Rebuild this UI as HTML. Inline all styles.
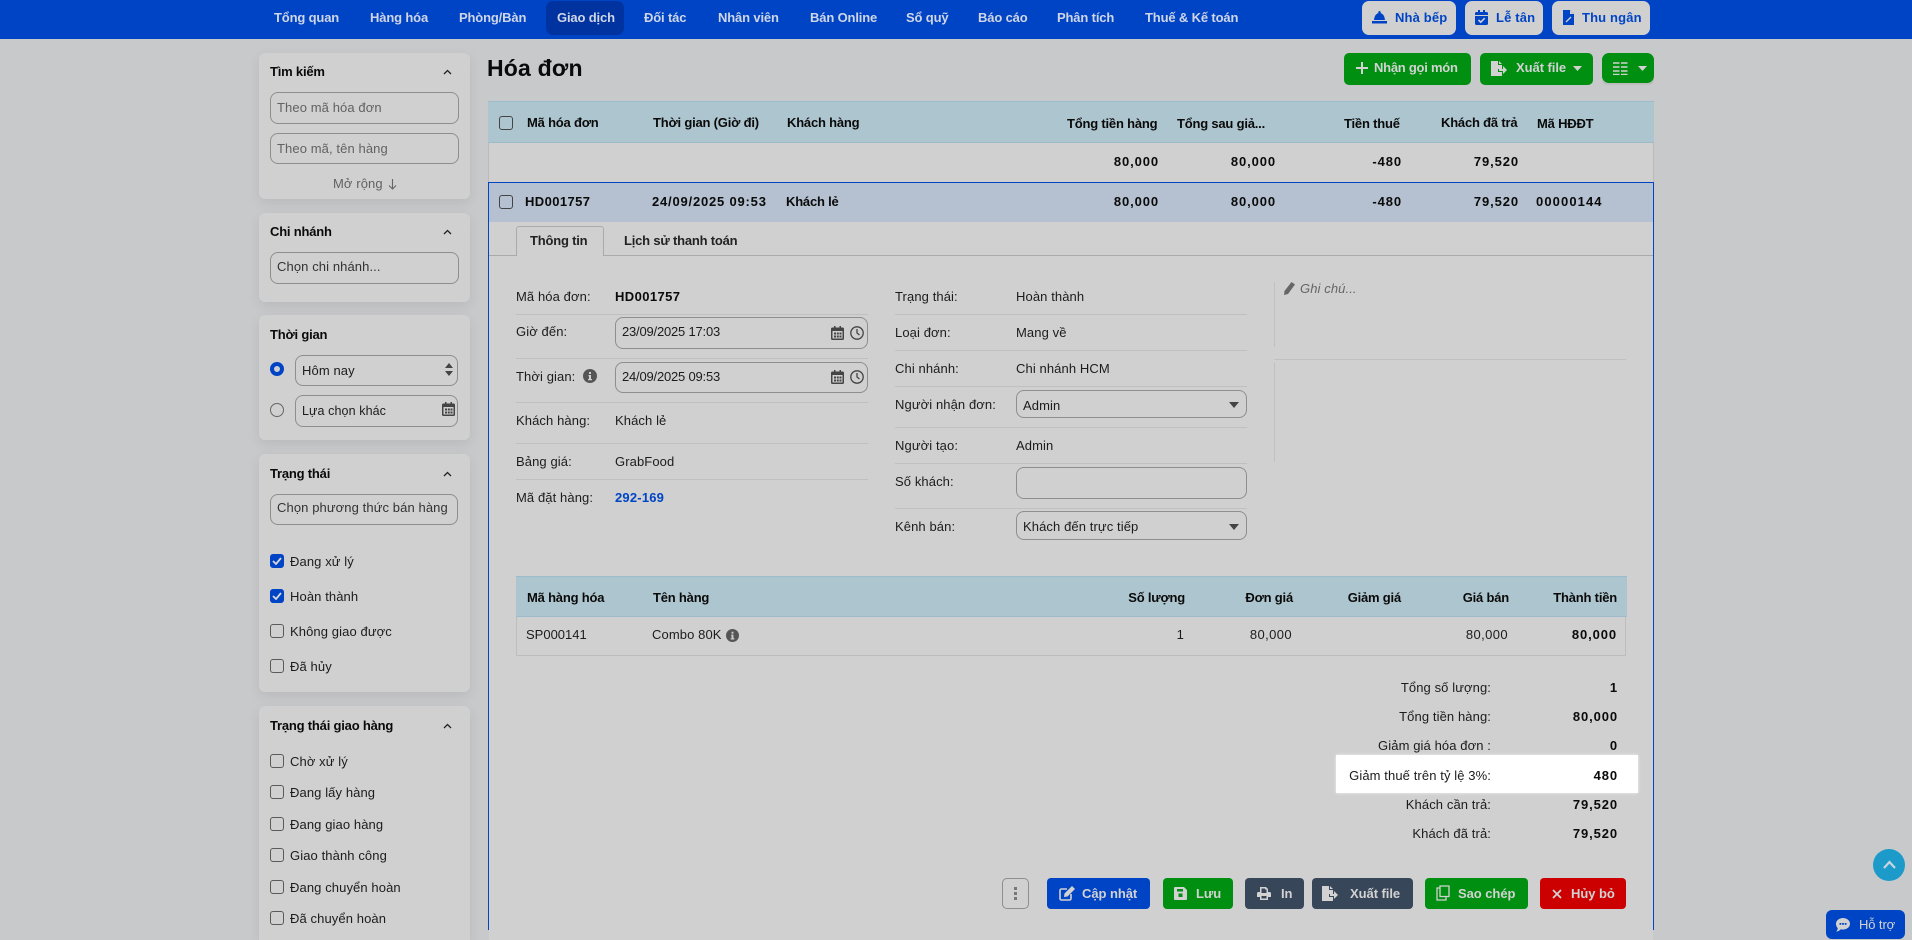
<!DOCTYPE html>
<html lang="vi"><head><meta charset="utf-8"><title>Hóa đơn</title>
<style>
*{box-sizing:border-box}
html,body{margin:0;padding:0;width:1912px;height:940px;overflow:hidden;background:#c8c9cb;font-family:"Liberation Sans","Noto Sans CJK SC",sans-serif;font-size:13px;color:#1c1c1c}
.a,.t,.r,.c,svg{position:absolute}
.t,.r,.c{line-height:16px;white-space:nowrap;letter-spacing:.1px}
.b{font-weight:700;color:#0a0a0a;letter-spacing:-.2px}
.n{font-weight:700;color:#0a0a0a;letter-spacing:.9px}
.m{letter-spacing:.4px}
.d{letter-spacing:-.2px}
.c{transform:translateX(-50%)}
.nav{left:0;top:0;width:1912px;height:39px;background:#0044c6}
.nt{color:#cfd6e6;font-weight:700;top:10px;letter-spacing:-.15px}
.nb{top:1px;height:34px;background:#d0d0d0;border-radius:7px}
.nbt{top:10px;color:#0044c6;font-weight:700;letter-spacing:.15px}
.card{left:259px;width:211px;background:#d0d0d0;border-radius:6px;box-shadow:0 4px 12px rgba(0,0,0,.08)}
.inp{border:1px solid #8e8e8e;border-radius:8px}
.ph{color:#626262}
.cb{left:270px;width:14px;height:14px;border:1px solid #5a5a5a;border-radius:3px}
.cb.on{background:#0044c6;border-color:#0044c6}
.hl{background:#adc5ce;border-top:1px solid #9dbccb;border-bottom:1px solid #9dbccb}
.sep{height:1px;background:#c0c0c0}
.btn{height:31px;border-radius:4px}
.wt{color:#d2d2d2;font-weight:700;letter-spacing:-.05px}
.gr{background:#008f11}
</style></head><body>

<div class="a nav"></div>
<div class="a" style="left:546px;top:1px;width:78px;height:34px;background:#0033a0;border-radius:7px"></div>
<span class="t nt" style="left:274px">Tổng quan</span>
<span class="t nt" style="left:370px">Hàng hóa</span>
<span class="t nt" style="left:459px">Phòng/Bàn</span>
<span class="t nt" style="left:557px">Giao dịch</span>
<span class="t nt" style="left:644px">Đối tác</span>
<span class="t nt" style="left:718px">Nhân viên</span>
<span class="t nt" style="left:810px">Bán Online</span>
<span class="t nt" style="left:906px">Sổ quỹ</span>
<span class="t nt" style="left:978px">Báo cáo</span>
<span class="t nt" style="left:1057px">Phân tích</span>
<span class="t nt" style="left:1145px">Thuế &amp; Kế toán</span>

<div class="a nb" style="left:1362px;width:94px"></div>
<div class="a nb" style="left:1465px;width:78px"></div>
<div class="a nb" style="left:1552px;width:98px"></div>
<svg style="left:1372px;top:11px" width="15" height="13" viewBox="0 0 15 13"><path fill="#0044c6" d="M7.5 0a1.3 1.3 0 0 1 1 2.1C11 2.6 12.6 5 13 9H2C2.4 5 4 2.6 6.5 2.1A1.3 1.3 0 0 1 7.5 0zM0 10h15v2.5H0z"/></svg>
<span class="t nbt" style="left:1395px">Nhà bếp</span>
<svg style="left:1475px;top:10px" width="13" height="15" viewBox="0 0 13 15"><path fill="#0044c6" d="M3 0h2v2h3V0h2v2h1.5A1.5 1.5 0 0 1 13 3.5V5H0V3.5A1.5 1.5 0 0 1 1.5 2H3zM0 6h13v7.5a1.5 1.5 0 0 1-1.5 1.500h-10A1.500 1.500 0 0 1 0 13.500z"/><path fill="none" stroke="#d0d0d0" stroke-width="1.6" d="M3.5 10l2.200 2.200 4-4"/></svg>
<span class="t nbt" style="left:1496px">Lễ tân</span>
<svg style="left:1563px;top:10px" width="11" height="15" viewBox="0 0 11 15"><path fill="#0044c6" d="M0 0h7l4 4v11H0z"/><path fill="none" stroke="#d0d0d0" stroke-width="1.3" d="M3 12l5-5"/><path fill="#d0d0d0" d="M7 0v4h4z"/></svg>
<span class="t nbt" style="left:1582px">Thu ngân</span>

<!-- sidebar -->
<div class="a card" style="top:53px;height:146px"></div>
<span class="t b" style="left:270px;top:64px">Tìm kiếm</span>
<svg style="left:443px;top:69px" width="9" height="6" viewBox="0 0 9 6"><path fill="none" stroke="#222" stroke-width="1.3" d="M1 5l3.5-3.500L8 5"/></svg>
<div class="a inp" style="left:270px;top:92px;width:189px;height:32px"></div>
<span class="t ph" style="left:277px;top:100px">Theo mã hóa đơn</span>
<div class="a inp" style="left:270px;top:133px;width:189px;height:31px"></div>
<span class="t ph" style="left:277px;top:141px">Theo mã, tên hàng</span>
<span class="t ph" style="left:333px;top:176px">Mở rộng</span>
<svg style="left:388px;top:178px" width="9" height="12" viewBox="0 0 9 12"><path fill="none" stroke="#666" stroke-width="1.1" d="M4.5 1v10M1 7.500l3.500 3.500L8 7.500"/></svg>

<div class="a card" style="top:213px;height:89px"></div>
<span class="t b" style="left:270px;top:224px">Chi nhánh</span>
<svg style="left:443px;top:229px" width="9" height="6" viewBox="0 0 9 6"><path fill="none" stroke="#222" stroke-width="1.3" d="M1 5l3.5-3.500L8 5"/></svg>
<div class="a inp" style="left:270px;top:252px;width:189px;height:32px"></div>
<span class="t" style="left:277px;top:259px;color:#333">Chọn chi nhánh...</span>

<div class="a card" style="top:315px;height:125px"></div>
<span class="t b" style="left:270px;top:327px">Thời gian</span>
<div class="a" style="left:270px;top:362px;width:14px;height:14px;border-radius:50%;border:4px solid #0044c6;background:#d0d0d0"></div>
<div class="a inp" style="left:295px;top:355px;width:163px;height:31px"></div>
<span class="t" style="left:302px;top:363px">Hôm nay</span>
<svg style="left:445px;top:363px" width="8" height="13" viewBox="0 0 8 13"><path fill="#444" d="M4 0l4 5H0zM4 13L0 8h8z"/></svg>
<div class="a" style="left:270px;top:403px;width:14px;height:14px;border-radius:50%;border:1px solid #666"></div>
<div class="a inp" style="left:295px;top:395px;width:163px;height:32px"></div>
<span class="t" style="left:302px;top:403px;font-size:12.5px">Lựa chọn khác</span>
<svg style="left:442px;top:402px" width="13" height="14" viewBox="0 0 13 14"><path fill="#444" d="M3 0h1.500v1.500h4V0H10v1.500h1.500A1.500 1.500 0 0 1 13 3v9.500a1.500 1.500 0 0 1-1.500 1.500h-10A1.500 1.500 0 0 1 0 12.500V3a1.500 1.500 0 0 1 1.500-1.500H3z"/><path fill="#d0d0d0" d="M1.500 5h10v7.500h-10z"/><path fill="#444" d="M3 6.500h2v2H3zM5.800 6.500h2v2h-2zM8.500 6.500h2v2h-2zM3 9.500h2v2H3zM5.800 9.500h2v2h-2zM8.500 9.500h2v2h-2z"/></svg>

<div class="a card" style="top:454px;height:238px"></div>
<span class="t b" style="left:270px;top:466px">Trạng thái</span>
<svg style="left:443px;top:471px" width="9" height="6" viewBox="0 0 9 6"><path fill="none" stroke="#222" stroke-width="1.3" d="M1 5l3.5-3.500L8 5"/></svg>
<div class="a inp" style="left:270px;top:494px;width:188px;height:31px"></div>
<span class="t" style="left:277px;top:500px;color:#333">Chọn phương thức bán hàng</span>
<div class="a cb on" style="top:554px"></div>
<svg style="left:272px;top:557px" width="10" height="8" viewBox="0 0 10 8"><path fill="none" stroke="#d8d8d8" stroke-width="1.8" d="M1 4l3 3 5-6"/></svg>
<span class="t" style="left:290px;top:554px">Đang xử lý</span>
<div class="a cb on" style="top:589px"></div>
<svg style="left:272px;top:592px" width="10" height="8" viewBox="0 0 10 8"><path fill="none" stroke="#d8d8d8" stroke-width="1.8" d="M1 4l3 3 5-6"/></svg>
<span class="t" style="left:290px;top:589px">Hoàn thành</span>
<div class="a cb" style="top:624px"></div>
<span class="t" style="left:290px;top:624px">Không giao được</span>
<div class="a cb" style="top:659px"></div>
<span class="t" style="left:290px;top:659px">Đã hủy</span>

<div class="a card" style="top:706px;height:234px;border-radius:6px 6px 0 0"></div>
<span class="t b" style="left:270px;top:718px">Trạng thái giao hàng</span>
<svg style="left:443px;top:723px" width="9" height="6" viewBox="0 0 9 6"><path fill="none" stroke="#222" stroke-width="1.3" d="M1 5l3.5-3.500L8 5"/></svg>
<div class="a cb" style="top:754px"></div><span class="t" style="left:290px;top:754px">Chờ xử lý</span>
<div class="a cb" style="top:785px"></div><span class="t" style="left:290px;top:785px">Đang lấy hàng</span>
<div class="a cb" style="top:817px"></div><span class="t" style="left:290px;top:817px">Đang giao hàng</span>
<div class="a cb" style="top:848px"></div><span class="t" style="left:290px;top:848px">Giao thành công</span>
<div class="a cb" style="top:880px"></div><span class="t" style="left:290px;top:880px">Đang chuyển hoàn</span>
<div class="a cb" style="top:911px"></div><span class="t" style="left:290px;top:911px">Đã chuyển hoàn</span>

<!-- header -->
<div class="t" style="left:487px;top:54px;font-size:23px;line-height:28px;font-weight:700;color:#0a0a0a;letter-spacing:.2px">Hóa đơn</div>
<div class="a gr" style="left:1344px;top:53px;width:127px;height:32px;border-radius:5px"></div>
<svg style="left:1356px;top:62px" width="12" height="12" viewBox="0 0 12 12"><path fill="#d2d2d2" d="M5 0h2v5h5v2H7v5H5V7H0V5h5z"/></svg>
<span class="t wt" style="left:1374px;top:60px;letter-spacing:-.25px">Nhận gọi món</span>
<div class="a gr" style="left:1480px;top:53px;width:113px;height:32px;border-radius:5px"></div>
<svg style="left:1491px;top:61px" width="17" height="15" viewBox="0 0 17 15"><path fill="#d2d2d2" d="M0 0h7v4h4v4H7v3h4v4H0zM8 0l3 3H8zM12 5l4 4-4 4v-3H8V8h4z"/></svg>
<span class="t wt" style="left:1516px;top:60px">Xuất file</span>
<svg style="left:1573px;top:66px" width="9" height="5" viewBox="0 0 9 5"><path fill="#d2d2d2" d="M0 0h9L4.5 5z"/></svg>
<div class="a" style="left:1602px;top:55px;width:52px;height:30px;background:#bdbdbd;border-radius:5px"></div>
<div class="a gr" style="left:1602px;top:53px;width:52px;height:30px;border-radius:7px"></div>
<svg style="left:1613px;top:62px" width="15" height="13" viewBox="0 0 15 13"><path fill="none" stroke="#d2d2d2" stroke-width="1.5" stroke-dasharray="6.5 1.5" d="M0 1h15M0 5h15M0 9h15M0 12.500h15"/></svg>
<svg style="left:1638px;top:66px" width="9" height="5" viewBox="0 0 9 5"><path fill="#d2d2d2" d="M0 0h9L4.5 5z"/></svg>

<!-- table -->
<div class="a hl" style="left:488px;top:101px;width:1166px;height:42px"></div>
<div class="a" style="left:488px;top:143px;width:1166px;height:39px;background:#d0d0d0;border-left:1px solid #bbb;border-right:1px solid #bbb"></div>
<div class="a" style="left:499px;top:116px;width:14px;height:14px;border:1px solid #444;border-radius:3px"></div>
<span class="t b" style="left:527px;top:115px">Mã hóa đơn</span>
<span class="t b" style="left:653px;top:115px">Thời gian (Giờ đi)</span>
<span class="t b" style="left:787px;top:115px">Khách hàng</span>
<span class="t b" style="left:1067px;top:116px">Tổng tiền hàng</span>
<span class="t b" style="left:1177px;top:116px">Tổng sau giả...</span>
<span class="t b" style="left:1344px;top:116px">Tiền thuế</span>
<span class="t b" style="left:1441px;top:115px">Khách đã trả</span>
<span class="t b" style="left:1537px;top:116px">Mã HĐĐT</span>
<span class="r n" style="right:753px;top:154px">80,000</span>
<span class="r n" style="right:636px;top:154px">80,000</span>
<span class="r n" style="right:510px;top:154px">-480</span>
<span class="r n" style="right:393px;top:154px">79,520</span>

<!-- expanded -->
<div class="a" style="left:489px;top:183px;width:1164px;height:757px;background:#d0d0d0"></div>
<div class="a" style="left:488px;top:182px;width:1166px;height:748px;border:1px solid #0044c6;border-bottom:0"></div>
<div class="a" style="left:489px;top:183px;width:1164px;height:39px;background:#b5c1d0"></div>
<div class="a" style="left:499px;top:195px;width:14px;height:14px;border:1px solid #444;border-radius:3px"></div>
<span class="t n" style="left:525px;top:194px;letter-spacing:.4px">HD001757</span>
<span class="t n" style="left:652px;top:194px;letter-spacing:.8px">24/09/2025 09:53</span>
<span class="t b" style="left:786px;top:194px">Khách lẻ</span>
<span class="r n" style="right:753px;top:194px">80,000</span>
<span class="r n" style="right:636px;top:194px">80,000</span>
<span class="r n" style="right:510px;top:194px">-480</span>
<span class="r n" style="right:393px;top:194px">79,520</span>
<span class="t n" style="left:1536px;top:194px;letter-spacing:1.1px">00000144</span>

<div class="a" style="left:489px;top:255px;width:1164px;height:1px;background:#aaa"></div>
<div class="a" style="left:516px;top:226px;width:88px;height:30px;background:#d0d0d0;border:1px solid #aaa;border-bottom:0;border-radius:3px 3px 0 0"></div>
<span class="t b" style="left:530px;top:233px;color:#222">Thông tin</span>
<span class="t b" style="left:624px;top:233px;color:#222">Lịch sử thanh toán</span>

<!-- left details -->
<span class="t" style="left:516px;top:289px">Mã hóa đơn:</span><span class="t n" style="left:615px;top:289px;letter-spacing:.4px">HD001757</span>
<div class="a sep" style="left:516px;top:314px;width:352px"></div>
<span class="t" style="left:516px;top:324px">Giờ đến:</span>
<div class="a inp" style="left:615px;top:317px;width:253px;height:32px"></div>
<span class="t d" style="left:622px;top:324px">23/09/2025 17:03</span>
<svg style="left:831px;top:326px" width="13" height="14" viewBox="0 0 13 14"><path fill="#444" d="M3 0h1.500v1.500h4V0H10v1.500h1.500A1.500 1.500 0 0 1 13 3v9.500a1.500 1.500 0 0 1-1.500 1.500h-10A1.500 1.500 0 0 1 0 12.500V3a1.500 1.500 0 0 1 1.500-1.500H3z"/><path fill="#d0d0d0" d="M1.500 5h10v7.500h-10z"/><path fill="#444" d="M3 6.500h2v2H3zM5.800 6.500h2v2h-2zM8.500 6.500h2v2h-2zM3 9.500h2v2H3zM5.800 9.500h2v2h-2zM8.500 9.500h2v2h-2z"/></svg>
<svg style="left:850px;top:326px" width="14" height="14" viewBox="0 0 14 14"><circle cx="7" cy="7" r="6.2" fill="none" stroke="#444" stroke-width="1.3"/><path fill="none" stroke="#444" stroke-width="1.3" d="M7 3v4l2.500 2"/></svg>
<div class="a sep" style="left:516px;top:358px;width:352px"></div>
<span class="t" style="left:516px;top:369px">Thời gian:</span>
<svg style="left:583px;top:369px" width="14" height="14" viewBox="0 0 14 14"><circle cx="7" cy="7" r="7" fill="#555"/><path fill="#d0d0d0" d="M6 3h2v2H6zM5.500 6H8v4h1v1.300H5V10h1V7.200h-.5z"/></svg>
<div class="a inp" style="left:615px;top:362px;width:253px;height:31px"></div>
<span class="t d" style="left:622px;top:369px">24/09/2025 09:53</span>
<svg style="left:831px;top:370px" width="13" height="14" viewBox="0 0 13 14"><path fill="#444" d="M3 0h1.500v1.500h4V0H10v1.500h1.500A1.500 1.500 0 0 1 13 3v9.500a1.500 1.500 0 0 1-1.500 1.500h-10A1.500 1.500 0 0 1 0 12.500V3a1.500 1.500 0 0 1 1.500-1.500H3z"/><path fill="#d0d0d0" d="M1.500 5h10v7.500h-10z"/><path fill="#444" d="M3 6.500h2v2H3zM5.800 6.500h2v2h-2zM8.500 6.500h2v2h-2zM3 9.500h2v2H3zM5.800 9.500h2v2h-2zM8.500 9.500h2v2h-2z"/></svg>
<svg style="left:850px;top:370px" width="14" height="14" viewBox="0 0 14 14"><circle cx="7" cy="7" r="6.2" fill="none" stroke="#444" stroke-width="1.3"/><path fill="none" stroke="#444" stroke-width="1.3" d="M7 3v4l2.500 2"/></svg>
<div class="a sep" style="left:516px;top:402px;width:352px"></div>
<span class="t" style="left:516px;top:413px">Khách hàng:</span><span class="t" style="left:615px;top:413px">Khách lẻ</span>
<div class="a sep" style="left:516px;top:443px;width:352px"></div>
<span class="t" style="left:516px;top:454px">Bảng giá:</span><span class="t" style="left:615px;top:454px">GrabFood</span>
<div class="a sep" style="left:516px;top:479px;width:352px"></div>
<span class="t" style="left:516px;top:490px">Mã đặt hàng:</span><span class="t" style="left:615px;top:490px;color:#0044c6;font-weight:700;letter-spacing:.2px">292-169</span>

<!-- middle details -->
<span class="t" style="left:895px;top:289px">Trạng thái:</span><span class="t" style="left:1016px;top:289px">Hoàn thành</span>
<div class="a sep" style="left:895px;top:314px;width:352px"></div>
<span class="t" style="left:895px;top:325px">Loại đơn:</span><span class="t" style="left:1016px;top:325px">Mang về</span>
<div class="a sep" style="left:895px;top:350px;width:352px"></div>
<span class="t" style="left:895px;top:361px">Chi nhánh:</span><span class="t" style="left:1016px;top:361px">Chi nhánh HCM</span>
<div class="a sep" style="left:895px;top:386px;width:352px"></div>
<span class="t" style="left:895px;top:397px">Người nhận đơn:</span>
<div class="a inp" style="left:1016px;top:390px;width:231px;height:28px"></div>
<span class="t" style="left:1023px;top:398px">Admin</span>
<svg style="left:1229px;top:402px" width="10" height="6" viewBox="0 0 10 6"><path fill="#444" d="M0 0h10L5 6z"/></svg>
<div class="a sep" style="left:895px;top:427px;width:352px"></div>
<span class="t" style="left:895px;top:438px">Người tạo:</span><span class="t" style="left:1016px;top:438px">Admin</span>
<div class="a sep" style="left:895px;top:463px;width:352px"></div>
<span class="t" style="left:895px;top:474px">Số khách:</span>
<div class="a inp" style="left:1016px;top:467px;width:231px;height:32px"></div>
<div class="a sep" style="left:895px;top:508px;width:352px"></div>
<span class="t" style="left:895px;top:519px">Kênh bán:</span>
<div class="a inp" style="left:1016px;top:511px;width:231px;height:29px"></div>
<span class="t" style="left:1023px;top:519px">Khách đến trực tiếp</span>
<svg style="left:1229px;top:524px" width="10" height="6" viewBox="0 0 10 6"><path fill="#444" d="M0 0h10L5 6z"/></svg>

<!-- right col -->
<div class="a" style="left:1274px;top:282px;width:1px;height:65px;background:#c0c0c0"></div>
<div class="a" style="left:1274px;top:359px;width:352px;height:1px;background:#c0c0c0"></div>
<div class="a" style="left:1274px;top:363px;width:1px;height:99px;background:#c0c0c0"></div>
<svg style="left:1284px;top:282px" width="11" height="13" viewBox="0 0 11 13"><path fill="#666" d="M7.500 0L11 2.500 4 12 0 13l.5-4z"/></svg>
<span class="t" style="left:1300px;top:281px;font-style:italic;color:#666">Ghi chú...</span>

<!-- items table -->
<div class="a hl" style="left:516px;top:576px;width:1111px;height:41px"></div>
<div class="a" style="left:516px;top:617px;width:1110px;height:39px;border:1px solid #bdbdbd;border-top:0"></div>
<span class="t b" style="left:527px;top:590px">Mã hàng hóa</span>
<span class="t b" style="left:653px;top:590px">Tên hàng</span>
<span class="r b" style="right:727px;top:590px">Số lượng</span>
<span class="r b" style="right:619px;top:590px">Đơn giá</span>
<span class="r b" style="right:511px;top:590px">Giảm giá</span>
<span class="r b" style="right:403px;top:590px">Giá bán</span>
<span class="r b" style="right:295px;top:590px">Thành tiền</span>
<span class="t" style="left:526px;top:627px;letter-spacing:0">SP000141</span>
<span class="t" style="left:652px;top:627px">Combo 80K</span>
<svg style="left:726px;top:629px" width="13" height="13" viewBox="0 0 14 14"><circle cx="7" cy="7" r="7" fill="#555"/><path fill="#d0d0d0" d="M6 3h2v2H6zM5.500 6H8v4h1v1.300H5V10h1V7.200h-.5z"/></svg>
<span class="r" style="right:728px;top:627px">1</span>
<span class="r m" style="right:620px;top:627px">80,000</span>
<span class="r m" style="right:404px;top:627px">80,000</span>
<span class="r n" style="right:295px;top:627px">80,000</span>

<!-- summary -->
<div class="a" style="left:1336px;top:755px;width:302px;height:38px;background:#fff;box-shadow:0 0 3px rgba(255,255,255,.7)"></div>
<span class="r" style="right:421px;top:680px">Tổng số lượng:</span><span class="r n" style="right:294px;top:680px">1</span>
<span class="r" style="right:421px;top:709px">Tổng tiền hàng:</span><span class="r n" style="right:294px;top:709px">80,000</span>
<span class="r" style="right:421px;top:738px">Giảm giá hóa đơn :</span><span class="r n" style="right:294px;top:738px">0</span>
<span class="r" style="right:421px;top:768px">Giảm thuế trên tỷ lệ 3%:</span><span class="r n" style="right:294px;top:768px">480</span>
<span class="r" style="right:421px;top:797px">Khách cần trả:</span><span class="r n" style="right:294px;top:797px">79,520</span>
<span class="r" style="right:421px;top:826px">Khách đã trả:</span><span class="r n" style="right:294px;top:826px">79,520</span>

<!-- action buttons -->
<div class="a" style="left:1002px;top:878px;width:27px;height:31px;border:1px solid #8e8e8e;border-radius:5px"></div>
<svg style="left:1014px;top:887px" width="3" height="13" viewBox="0 0 3 13"><path fill="#777" d="M0 0h3v3H0zM0 5h3v3H0zM0 10h3v3H0z"/></svg>

<div class="a btn" style="left:1047px;top:878px;width:103px;background:#0044c6"></div>
<svg style="left:1059px;top:886px" width="16" height="15" viewBox="0 0 16 15"><path fill="none" stroke="#d2d2d2" stroke-width="1.6" d="M8 3H2.500A1.500 1.500 0 0 0 1 4.500v8A1.500 1.500 0 0 0 2.500 14h8a1.500 1.500 0 0 0 1.500-1.500V8"/><path fill="#d2d2d2" d="M13 0l3 3-7.500 7.500-3.500.5.500-3.500z"/></svg>
<span class="t wt" style="left:1082px;top:886px">Cập nhật</span>

<div class="a btn" style="left:1163px;top:878px;width:70px;background:#008f11"></div>
<svg style="left:1174px;top:887px" width="13" height="13" viewBox="0 0 13 13"><path fill="#d2d2d2" fill-rule="evenodd" d="M1 0h9l3 3v9a1 1 0 0 1-1 1H1a1 1 0 0 1-1-1V1a1 1 0 0 1 1-1zM3 2v2.500h6V2zM4.500 6.500v3.500h4V6.500z"/></svg>
<span class="t wt" style="left:1196px;top:886px">Lưu</span>

<div class="a btn" style="left:1245px;top:878px;width:59px;background:#38465a"></div>
<svg style="left:1257px;top:887px" width="14" height="13" viewBox="0 0 14 13"><path fill="#d2d2d2" fill-rule="evenodd" d="M3 0h6l2 2v3h1.500A1.500 1.500 0 0 1 14 6.500V10h-3v3H3v-3H0V6.500A1.500 1.500 0 0 1 1.500 5H3zM4.500 1.500V6h5V2.500h-1.500v-1zM4.500 9v2.500h5V9z"/></svg>
<span class="t wt" style="left:1281px;top:886px">In</span>

<div class="a btn" style="left:1312px;top:878px;width:101px;background:#38465a"></div>
<svg style="left:1322px;top:886px" width="17" height="15" viewBox="0 0 17 15"><path fill="#d2d2d2" d="M0 0h7v4h4v4H7v3h4v4H0zM8 0l3 3H8zM12 5l4 4-4 4v-3H8V8h4z"/></svg>
<span class="t wt" style="left:1350px;top:886px">Xuất file</span>

<div class="a btn" style="left:1425px;top:878px;width:103px;background:#008f11"></div>
<svg style="left:1436px;top:885px" width="14" height="16" viewBox="0 0 14 16"><path fill="none" stroke="#d2d2d2" stroke-width="1.3" d="M4 1h9v10.500H4zM4 3H1v12h9v-3.500"/></svg>
<span class="t wt" style="left:1458px;top:886px">Sao chép</span>

<div class="a btn" style="left:1540px;top:878px;width:86px;background:#cc0000"></div>
<svg style="left:1552px;top:889px" width="10" height="10" viewBox="0 0 10 10"><path fill="none" stroke="#d2d2d2" stroke-width="1.8" d="M1 1l8 8M9 1l-8 8"/></svg>
<span class="t wt" style="left:1571px;top:886px">Hủy bỏ</span>

<!-- floats -->
<div class="a" style="left:1873px;top:849px;width:32px;height:32px;border-radius:50%;background:#1c9bcb"></div>
<svg style="left:1883px;top:860px" width="13" height="9" viewBox="0 0 13 9"><path fill="none" stroke="#c6d6de" stroke-width="2.2" d="M1 8l5.500-6L12 8"/></svg>
<div class="a" style="left:1826px;top:910px;width:79px;height:29px;border-radius:6px;background:#0044c6"></div>
<svg style="left:1836px;top:918px" width="14" height="14" viewBox="0 0 14 14"><path fill="#d2d2d2" d="M7 0c3.900 0 7 2.600 7 5.800s-3.100 5.800-7 5.800c-.8 0-1.500-.1-2.200-.3C3.800 12.600 2 13.600 0 13.600c1-.8 1.700-2.200 1.800-3.400C.7 9.200 0 7.600 0 5.800 0 2.600 3.100 0 7 0z"/><path fill="#0044c6" d="M3.500 5h1.800v1.800H3.500zM6.100 5h1.800v1.800H6.100zM8.700 5h1.800v1.800H8.700z"/></svg>
<span class="t" style="left:1859px;top:917px;color:#d2d2d2;letter-spacing:-.1px">Hỗ trợ</span>

</body></html>
